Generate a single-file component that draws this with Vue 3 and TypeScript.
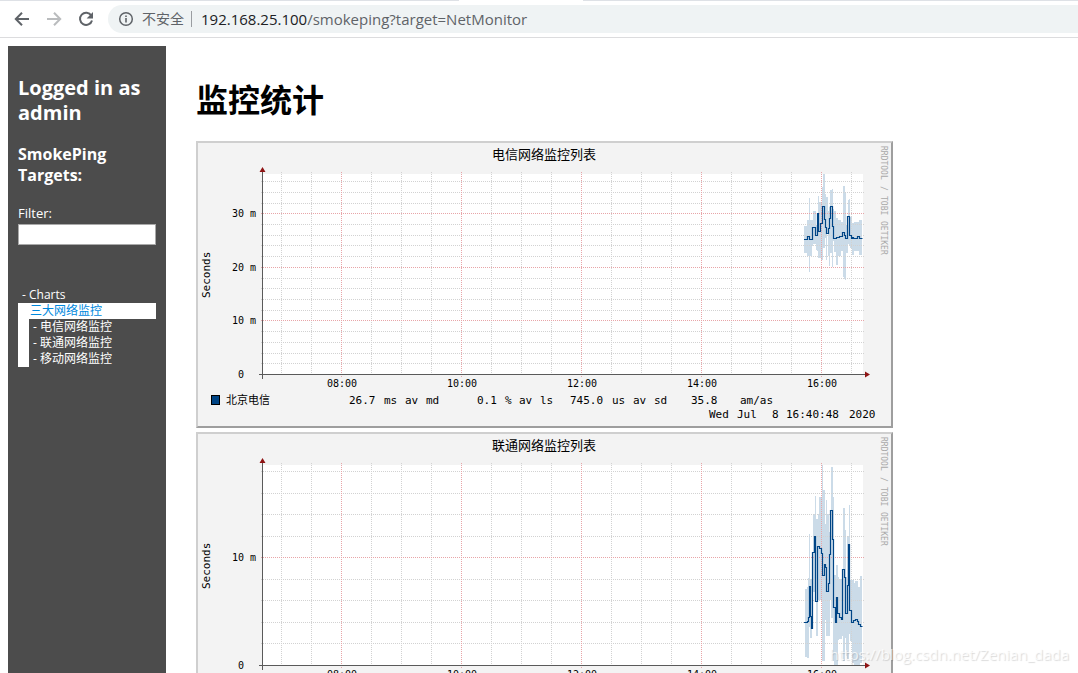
<script setup lang="ts">
import { ref } from 'vue'

type Band = [x: number, width: number, top: number, bottom: number]
type Step = [x: number, y: number]

interface Chart {
  title: string
  majors: { y: number; label: string }[]
  minors: number[]
  bands: Band[]
  steps: Step[]
  legend?: { host: string; stats: { x: number; text: string }[]; date: { x: number; text: string } }
}

const filter = ref('')
const targets = ['电信网络监控', '联通网络监控', '移动网络监控']

const hours = ['08:00', '10:00', '12:00', '14:00', '16:00'].map((label, i) => ({
  label,
  x: 145.5 + i * 120,
}))
const halfHours = Array.from({ length: 20 }, (_, i) => 85.5 + i * 30).filter(
  (x) => (x - 145.5) % 120 !== 0,
)

const charts: Chart[] = [
  {
    title: '电信网络监控列表',
    majors: [
      { y: 72.5, label: '30 m' },
      { y: 126.5, label: '20 m' },
      { y: 179.5, label: '10 m' },
    ],
    minors: [40.5, 51.5, 62.5, 83.5, 94.5, 104.5, 115.5, 137.5, 147.5, 158.5, 169.5, 190.5, 201.5, 212.5, 222.5],
    bands: [
      [608, 3, 85, 112], [611, 2, 79, 115], [613, 1, 57, 131], [614, 2, 79, 115], [616, 1, 79, 105],
      [617, 3, 70, 103], [620, 1, 84, 109], [621, 1, 75, 110], [622, 1, 55, 117], [623, 2, 61, 117],
      [625, 1, 62, 119], [626, 1, 46, 119], [627, 2, 33, 107], [629, 1, 53, 97], [630, 1, 56, 119],
      [631, 1, 56, 93], [632, 1, 70, 115], [633, 1, 66, 125], [634, 2, 49, 112], [636, 1, 48, 126],
      [637, 1, 68, 100], [638, 2, 70, 111], [640, 2, 77, 124], [642, 3, 79, 115], [645, 2, 81, 110],
      [647, 1, 45, 136], [648, 1, 45, 138], [649, 1, 51, 139], [650, 2, 84, 112], [652, 1, 59, 103],
      [653, 1, 58, 105], [654, 2, 76, 107], [656, 2, 82, 114], [658, 5, 81, 110], [663, 3, 79, 114],
    ],
    steps: [
      [608, 98.5], [611, 95.5], [613, 98.5], [616, 86.5], [619, 94.5], [621, 72.5], [622, 90.5],
      [624, 82.5], [626, 65.5], [628, 78.5], [629, 86.5], [630, 92.5], [632, 87.5], [633, 77.5],
      [634, 65.5], [636, 85.5], [637, 97.5], [640, 96.5], [643, 95.5], [646, 91.5], [648, 94.5],
      [649, 97.5], [651, 75.5], [653, 94.5], [655, 97.5], [656, 96.5], [657, 97.5], [661, 95.5],
      [663, 97.5], [666, 97.5],
    ],
    legend: {
      host: '北京电信',
      stats: [
        { x: 153, text: '26.7 ms av md' },
        { x: 281, text: '0.1 % av ls' },
        { x: 374, text: '745.0 us av sd' },
        { x: 495, text: '35.8' },
        { x: 544, text: 'am/as' },
      ],
      date: { x: 513, text: 'Wed Jul  8 16:40:48 2020' },
    },
  },
  {
    title: '联通网络监控列表',
    majors: [{ y: 125.5, label: '10 m' }],
    minors: [39.5, 61.5, 82.5, 104.5, 147.5, 168.5, 190.5, 211.5],
    bands: [
      [609, 2, 157, 225], [611, 1, 155, 226], [612, 1, 146, 226], [613, 1, 102, 195], [614, 2, 147, 206],
      [616, 1, 120, 186], [617, 2, 82, 160], [619, 1, 64, 163], [620, 2, 87, 204], [622, 1, 82, 168],
      [623, 3, 65, 168], [626, 1, 33, 229], [627, 2, 58, 229], [629, 1, 92, 188], [630, 1, 68, 204],
      [631, 2, 82, 204], [633, 1, 100, 204], [634, 1, 78, 168], [635, 2, 35, 186], [637, 1, 65, 229],
      [638, 2, 143, 234], [640, 2, 133, 234], [642, 1, 145, 208], [643, 3, 147, 207], [646, 1, 143, 204],
      [647, 2, 76, 229], [649, 1, 98, 206], [650, 1, 145, 224], [651, 2, 104, 227], [653, 1, 73, 202],
      [654, 2, 148, 209], [656, 2, 148, 231], [658, 1, 151, 234], [659, 3, 149, 234], [662, 2, 155, 234],
      [664, 2, 144, 231],
    ],
    steps: [
      [608, 190.5], [611, 189.5], [612, 185.5], [613, 154.5], [614, 184.5], [615, 196.5], [616, 120.5],
      [618, 104.5], [619, 169.5], [621, 114.5], [623, 116.5], [625, 121.5], [626, 143.5], [628, 132.5],
      [629, 135.5], [630, 159.5], [632, 151.5], [633, 122.5], [634, 78.5], [636, 107.5], [637, 175.5],
      [639, 190.5], [640, 165.5], [641, 181.5], [643, 185.5], [645, 187.5], [646, 137.5], [648, 145.5],
      [649, 181.5], [651, 153.5], [652, 112.5], [653, 178.5], [655, 190.5], [657, 188.5], [659, 187.5],
      [661, 189.5], [662, 192.5], [664, 194.5], [666, 194.5],
    ],
  },
]

function stepPath(steps: Step[]): string {
  return steps
    .map(([x, y], i) => (i === 0 ? `M${x} ${y}` : `H${x + 0.5}V${y}`))
    .join('')
}

const CELL = 7

// Words start on a fixed grid of character cells.
function words(line: { x: number; text: string }) {
  return [...line.text.matchAll(/\S+/g)].map((m) => ({
    text: m[0],
    x: line.x + (m.index ?? 0) * CELL,
  }))
}
</script>

<template>
  <div class="window">
    <header class="toolbar">
      <div class="tab-strip"><span class="tab-gap"></span></div>
      <div class="nav-row">
        <button class="nav-button" aria-label="Back">
          <svg width="16" height="16" viewBox="0 0 16 16"><path d="M15 8H2.5M8 1.8 1.8 8 8 14.2" fill="none" stroke="#5f6368" stroke-width="2" /></svg>
        </button>
        <button class="nav-button" aria-label="Forward" disabled>
          <svg width="16" height="16" viewBox="0 0 16 16"><path d="M1 8h12.5M8 1.8 14.2 8 8 14.2" fill="none" stroke="#babcbe" stroke-width="2" /></svg>
        </button>
        <button class="nav-button" aria-label="Reload">
          <svg width="16" height="16" viewBox="0 0 16 16"><path d="M13.3 4.6A6.1 6.1 0 1 0 14 9.4" fill="none" stroke="#5f6368" stroke-width="2" /><path d="M15 1v6.4H8.6z" fill="#5f6368" /></svg>
        </button>
        <div class="address">
          <svg width="16" height="16" viewBox="0 0 16 16"><circle cx="8" cy="8" r="6.3" fill="none" stroke="#5f6368" stroke-width="1.5" /><path d="M7.2 7h1.6v4.4H7.2zM7.2 4.4h1.6V6H7.2z" fill="#5f6368" /></svg>
          <span class="insecure">不安全</span>
          <span class="url"><span class="host">192.168.25.100</span>/smokeping?target=NetMonitor</span>
        </div>
      </div>
    </header>

    <div class="page">
      <aside class="sidebar">
        <h2>Logged in as admin</h2>
        <h3>SmokePing Targets:</h3>
        <label for="filter">Filter:</label>
        <input id="filter" v-model="filter" type="text" />
        <nav class="menu">
          <a class="root-link" href="#charts">- Charts</a>
          <a class="active-link" href="#net">三大网络监控</a>
          <div class="submenu">
            <a v-for="name in targets" :key="name" href="#target">- {{ name }}</a>
          </div>
        </nav>
      </aside>

      <main class="content">
        <h1>监控统计</h1>
        <a v-for="chart in charts" :key="chart.title" class="chart" href="#chart">
          <svg width="697" height="287" viewBox="0 0 697 287" role="img" :aria-label="chart.title">
            <rect width="697" height="287" fill="#9e9e9e" />
            <path d="M0 287V0H697L695 2V285H2z" fill="#cfcfcf" />
            <rect x="2" y="2" width="693" height="283" fill="#f3f3f3" />
            <rect x="67" y="33" width="600" height="201" fill="#fff" />

            <g fill="#cbdbe8" shape-rendering="crispEdges">
              <rect v-for="b in chart.bands" :key="b[0]" :x="b[0]" :y="b[2]" :width="b[1]" :height="b[3] - b[2]" />
            </g>

            <g class="minor">
              <line v-for="y in chart.minors" :key="y" x1="65" x2="669" :y1="y" :y2="y" />
              <line v-for="x in halfHours" :key="x" y1="31" y2="235" :x1="x" :x2="x" />
            </g>
            <g class="major">
              <line v-for="m in chart.majors" :key="m.y" x1="65" x2="669" :y1="m.y" :y2="m.y" />
              <line v-for="h in hours" :key="h.x" y1="31" y2="236" :x1="h.x" :x2="h.x" />
            </g>

            <path :d="stepPath(chart.steps)" fill="none" stroke="#004586" stroke-width="1.2" />

            <path d="M63 233.5H670M66.5 238V30" fill="none" stroke="#5a5a5a" />
            <path d="M669 230.5v6l5-3zM63.5 31h6l-3-5z" fill="#8f1414" />

            <text class="title" x="348" y="18" text-anchor="middle">{{ chart.title }}</text>
            <text class="axis-title" transform="translate(14 157) rotate(-90)">Seconds</text>
            <text class="credit" transform="translate(685 5) rotate(90)">
              <tspan v-for="w in [{ x: 0, t: 'RRDTOOL' }, { x: 40, t: '/' }, { x: 50, t: 'TOBI' }, { x: 75, t: 'OETIKER' }]" :key="w.x" :x="w.x">{{ w.t }}</tspan>
            </text>

            <g class="tick">
              <text v-for="m in chart.majors" :key="m.label" x="36" :y="m.y + 3.5">{{ m.label }}</text>
              <text x="42" y="237">0</text>
              <text v-for="h in hours" :key="h.label" :x="h.x + 0.5" y="246" text-anchor="middle">{{ h.label }}</text>
            </g>

            <g v-if="chart.legend" class="legend">
              <rect x="15.5" y="254.5" width="8" height="9" fill="#004586" stroke="#000" />
              <text x="30" y="263">{{ chart.legend.host }}</text>
              <text v-for="s in chart.legend.stats" :key="s.x" y="263">
                <tspan v-for="w in words(s)" :key="w.x" :x="w.x">{{ w.text }}</tspan>
              </text>
              <text y="277">
                <tspan v-for="w in words(chart.legend.date)" :key="w.x" :x="w.x">{{ w.text }}</tspan>
              </text>
            </g>
          </svg>
        </a>
      </main>
    </div>
    <div class="watermark">https://blog.csdn.net/Zenian_dada</div>
  </div>
</template>

<style>
html,
body {
  background: #fff;
}
</style>

<style scoped>
.window {
  position: relative;
  display: flex;
  flex-direction: column;
  height: 100vh;
  overflow: hidden;
  font-family: "Open Sans", "Noto Sans CJK SC", sans-serif;
}
.toolbar {
  flex: none;
  border-bottom: 1px solid #dcdcde;
}
.tab-strip {
  display: flex;
  height: 1px;
  background: #dee1e6;
}
.tab-gap {
  width: 124px;
  margin-left: 459px;
  background: #fff;
}
.nav-row {
  display: flex;
  align-items: center;
  gap: 16px;
  padding: 4px 0 4px 14px;
}
.nav-button {
  display: flex;
  padding: 0;
  border: 0;
  background: none;
}
.address {
  display: flex;
  flex: 1;
  align-items: center;
  height: 28px;
  margin-left: -2px;
  padding-left: 10px;
  border-radius: 14px 0 0 14px;
  background: #eff3f4;
  color: #5f6368;
  font-size: 15px;
}
.insecure {
  margin-left: 8px;
  padding-right: 7px;
  border-right: 1px solid #9a9da1;
  font-size: 14px;
  line-height: 16px;
}
.url {
  margin-left: 9px;
  line-height: 20px;
  padding-bottom: 1px;
  white-space: nowrap;
}
.host {
  color: #202124;
}
.page {
  display: flex;
  flex: 1;
  min-height: 0;
  gap: 30px;
  padding: 8px 8px 0;
}
.sidebar {
  flex: none;
  box-sizing: border-box;
  width: 158px;
  padding: 29px 10px 0;
  background: #4c4c4c;
  color: #fff;
}
h2,
h3 {
  margin: 0 0 19px;
  font-size: 20px;
  line-height: 25px;
}
h3 {
  margin-bottom: 18px;
  font-size: 16px;
  line-height: 21px;
}
label {
  display: block;
  font-size: 13px;
  line-height: 18px;
}
input {
  display: block;
  box-sizing: border-box;
  width: 100%;
  height: 21px;
  margin: 2px 0 42px;
  border: 1px solid #a9a9a9;
  background: #fff;
}
.menu a {
  display: block;
  color: #fff;
  font-size: 12px;
  line-height: 16px;
  text-decoration: none;
}
.menu .root-link {
  padding-left: 4px;
}
.menu .active-link {
  padding-left: 12px;
  background: #fff;
  color: #0088dd;
}
.submenu {
  padding-left: 4px;
  border-left: 11px solid #fff;
}
.content {
  flex: 1;
  min-width: 0;
}
h1 {
  margin: 34px 0 21px;
  color: #000;
  font-size: 32px;
  line-height: 40px;
}
.chart {
  display: block;
  height: 287px;
  margin-bottom: 4px;
}
.chart svg {
  display: block;
}
.chart text {
  font-family: "DejaVu Sans Mono", "Noto Sans CJK SC", monospace;
  fill: #000;
}
.minor line {
  stroke: #d2d2d2;
  stroke-dasharray: 1 1;
}
.major line {
  stroke: #e8a5a8;
  stroke-dasharray: 1 1;
}
.chart .title {
  font-size: 13px;
}
.chart .axis-title,
.legend text {
  font-size: 11px;
}
.tick text {
  font-size: 10px;
}
.chart .credit {
  fill: #a9a9a9;
  font-size: 8px;
}
.watermark {
  position: absolute;
  right: 9px;
  bottom: 8px;
  color: rgba(255, 255, 255, 0.75);
  font-size: 15px;
  line-height: 22px;
  text-shadow: 1px 1px 1px rgba(0, 0, 0, 0.15);
}
</style>
